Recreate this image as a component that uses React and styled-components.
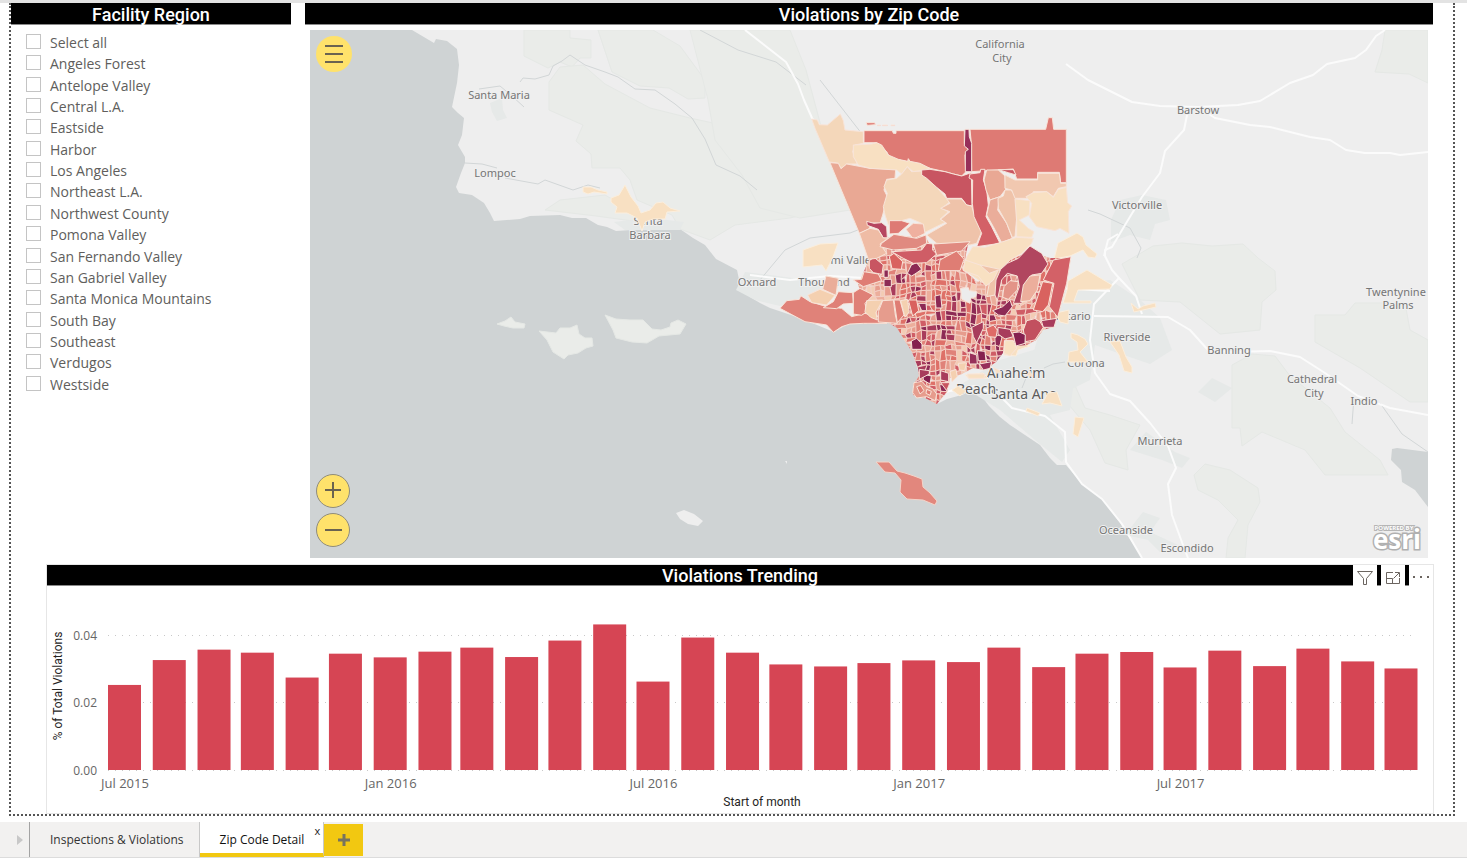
import React from 'react';
import styled, { createGlobalStyle } from 'styled-components';

const GlobalStyle = createGlobalStyle`
  *, *::before, *::after { box-sizing: border-box; }
  body {
    margin: 0;
    background: #fff;
    color: #605e5c;
    font-family: 'Open Sans', 'Noto Sans', sans-serif;
  }
  button, input { font: inherit; }
`;

const DIN = "Roboto, 'Liberation Sans', sans-serif";

const Page = styled.div`
  display: flex;
  flex-direction: column;
  border-top: 3px solid #e3e3e3;
`;

const Canvas = styled.main`
  margin: 0 12px 6px 9px;
  border: 2px dotted #555;
  border-top: 0;
`;

const TopRow = styled.div`
  display: flex;
  align-items: flex-start;
  gap: 14px;
  margin: 0 20px 6px 0;
`;

const Slicer = styled.section`
  flex: 0 0 280px;
`;

const MapPanel = styled.section`
  flex: 1;
  min-width: 0;
`;

const TitleBar = styled.header`
  display: grid;
  grid-template-columns: 1fr auto 1fr;
  height: ${(p) => p.$height}px;
  background: #000;
  border-bottom: 1px solid #8a8a8a;
  line-height: ${(p) => p.$line}px;
`;

const Title = styled.h2`
  grid-column: 2;
  margin: 0;
  color: #fff;
  font-family: ${DIN};
  font-size: 18px;
  font-weight: 500;
`;

const RegionList = styled.ul`
  display: grid;
  grid-auto-rows: 1fr;
  height: 363px;
  margin: 6px 0 0;
  padding: 0 0 0 15px;
  list-style: none;
`;

const RegionLabel = styled.label`
  display: flex;
  align-items: center;
  gap: 9px;
  font-size: 14px;
  line-height: 18px;
`;

const RegionName = styled.span`
  padding-top: 3px;
`;

const CheckBox = styled.input`
  appearance: none;
  width: 15px;
  height: 15px;
  margin: 0;
  border: 1px solid #c4c4c4;
  background: #fff;
  &:checked { background: #605e5c; }
`;

const MapFrame = styled.div`
  position: relative;
  margin: 5px 5px 0;
`;

const MapSvg = styled.svg`
  display: block;
  width: 100%;
  aspect-ratio: 1118 / 528;
  background: #cfd3d4;
`;

const MapLabel = styled.text`
  fill: ${(p) => (p.$major ? '#5c5c5c' : '#757575')};
  stroke: #f0f0f0;
  stroke-width: 2px;
  paint-order: stroke;
  font: ${(p) => (p.$major ? 14 : 11)}px 'Noto Sans', sans-serif;
  text-anchor: middle;
`;

const EsriSmall = styled.text`
  fill: #fff;
  stroke: #b5b5b5;
  stroke-width: 2px;
  paint-order: stroke;
  font: 700 6px 'Open Sans', sans-serif;
  text-anchor: middle;
`;

const EsriWord = styled.text`
  fill: #fff;
  stroke: #b0b0b0;
  stroke-width: 3px;
  paint-order: stroke;
  font: 700 26px 'Open Sans', sans-serif;
  text-anchor: middle;
`;

const RoundButton = styled.button`
  display: grid;
  place-items: center;
  width: ${(p) => (p.$plain ? 36 : 34)}px;
  height: ${(p) => (p.$plain ? 36 : 34)}px;
  padding: 0;
  border: ${(p) => (p.$plain ? '0' : '1px solid #8f8c7c')};
  border-radius: 50%;
  background: #ffe26b;
`;

const MenuSpot = styled.div`
  position: absolute;
  top: 6px;
  left: 6px;
`;

const ZoomSpot = styled.div`
  position: absolute;
  bottom: 11px;
  left: 6px;
  display: flex;
  flex-direction: column;
  gap: 5px;
`;

const TrendPanel = styled.section`
  margin: 0 19px 0 35px;
  border: 1px solid #e6e6e6;
`;

const Tools = styled.div`
  grid-column: 3;
  justify-self: end;
  display: flex;
  gap: 4px;
  height: 21px;
`;

const ToolButton = styled.button`
  display: grid;
  place-items: center;
  width: 24px;
  height: 21px;
  padding: 4px 0 0;
  border: 0;
  background: #fff;
`;

const ChartSvg = styled.svg`
  display: block;
  width: 100%;
`;

const AxisText = styled.text`
  fill: #666;
  font: ${(p) => (p.$vertical ? 12 : 13)}px 'Open Sans', sans-serif;
  text-anchor: ${(p) => (p.$vertical ? 'end' : 'middle')};
`;

const AxisTitle = styled.text`
  fill: #252423;
  font: 12px ${DIN};
  text-anchor: middle;
`;

const TabBar = styled.nav`
  display: flex;
  height: 36px;
  background: #f2f1f0;
  border-bottom: 1px solid #dcdcdc;
`;

const ScrollButton = styled.button`
  display: grid;
  place-items: center;
  width: 30px;
  padding: 0 0 0 10px;
  border: 0;
  border-right: 1px solid #a3a3a3;
  background: none;
`;

const Tab = styled.div`
  position: relative;
  display: flex;
  border-right: 1px solid #c8c8c8;
  border-bottom: ${(p) => (p.$active ? '4px solid #f2c811' : '0')};
  background: ${(p) => (p.$active ? '#fff' : 'transparent')};
`;

const TabButton = styled.button`
  height: 35px;
  padding: 0 ${(p) => (p.$active ? 19 : 15)}px 0 20px;
  border: 0;
  background: none;
  color: ${(p) => (p.$active ? '#111' : '#333')};
  font-size: 12px;
  line-height: 35px;
  white-space: nowrap;
`;

const CloseButton = styled.button`
  position: absolute;
  top: 2px;
  right: 2px;
  padding: 0 1px;
  border: 0;
  background: none;
  color: #222;
  font-size: 11px;
  line-height: 14px;
`;

const AddButton = styled.button`
  display: grid;
  place-items: center;
  width: 39px;
  height: 32px;
  margin-top: 2px;
  padding: 0;
  border: 0;
  background: #f2c811;
`;

const regions = [
  'Select all', 'Angeles Forest', 'Antelope Valley', 'Central L.A.', 'Eastside', 'Harbor',
  'Los Angeles', 'Northeast L.A.', 'Northwest County', 'Pomona Valley', 'San Fernando Valley',
  'San Gabriel Valley', 'Santa Monica Mountains', 'South Bay', 'Southeast', 'Verdugos', 'Westside',
];

/* ---------- map data ---------- */

const land =
  'M412 30L434 43 436 39 447 41 457 49 459 65 457 83 452 107 458 113 464 118 462 135 458 145 465 157 465 163 461 173 456 187 459 193 472 195 484 203 490 213 494 221 520 219 530 216 560 215 572 218 586 218 598 225 607 227 616 231 632 230 660 228 680 229 693 238 705 245 716 259 737 270 740 284 750 297 760 303 770 308 800 318 834 332 848 324 889 323 897 328 905 341 912 352 918 370 919 376 913 385 913 395 925 398 937 404 947 399 958 396 968 392 980 394 989 406 1000 417 1010 425 1022 433 1040 445 1050 458 1057 465 1066 465 1082 484 1102 499 1120 523 1142 558H1428V30Z';

const islands = [
  'M497 324L505 321 511 317 515 322 525 324 524 328 513 328 504 326Z',
  'M539 331L556 333 560 328 570 328 577 325 579 334 585 338 592 338 593 346 586 348 578 353 568 355 564 359 553 352 547 340Z',
  'M605 315L616 319 630 320 643 320 652 329 661 330 670 327 671 323 678 320 686 324 680 334 659 336 647 343 632 342 616 338 613 330Z',
];

const bareIslands = 'M676 513L684 510 694 514 703 521 698 526 688 524 680 519ZM785 461L787 461 787 464Z';

const parks = [
  'M524 30H570L570 38 591 40V58H580L572 67 560 62 548 68 524 56Z',
  'M598 30H653L680 46 705 80 705 98 688 99 669 88 640 86 612 72Z',
  'M549 82L560 67 583 65 605 84 650 108 690 118 745 130 790 165 820 190 822 210 790 218 735 225 710 240 680 229 672 215 637 200 630 180 620 168H592L591 154 576 141 583 125 549 110Z',
  'M545 210L560 200 605 195 640 215 640 222 596 216Z',
  'M690 30H790L806 70 822 130 850 210 800 218 760 208 742 175 715 140 708 100Z',
  'M1385 30H1428V83L1409 74 1375 72 1382 50Z',
  'M1122 264L1153 246 1182 243 1212 246 1243 244 1258 258 1275 271 1276 290 1262 302 1260 330 1220 334 1180 302 1140 300Z',
  'M1315 315H1345L1355 303H1405L1410 330 1428 340V402H1410L1360 368 1315 342Z',
  'M1232 365L1252 354 1275 356 1290 376 1300 384 1330 408 1345 432 1380 460 1388 475H1325L1305 450 1262 432 1242 446 1240 428H1232Z',
  'M1069 372L1085 408 1110 415 1140 425 1126 450 1128 470 1105 463 1090 430 1069 405Z',
  'M1194 475L1205 464 1230 470 1258 488 1260 502 1248 525 1245 558H1226L1228 538 1238 520 1218 500 1198 490Z',
];

const urban = [
  'M1120 200L1142 195 1166 200 1170 220 1155 224 1150 240 1130 235 1111 242V220Z',
  'M1060 285L1110 280 1140 300 1160 318 1172 350 1150 364 1115 352 1095 345 1090 380 1060 395 1030 365 1040 330Z',
  'M960 385L1000 360 1050 345 1075 375 1070 410 1050 415 1070 450 1062 462 1035 440 1000 410Z',
  'M1198 392L1212 378 1232 388 1215 402Z',
  'M1130 450L1146 432 1175 452 1190 458 1182 468 1162 460Z',
  'M1125 535L1143 512 1160 518 1150 532 1178 545 1160 552 1148 540Z',
  'M490 103L502 98 503 110 507 118 497 121 492 112Z',
  'M736 290L745 272 770 275 808 280 838 290 820 302 780 306 755 300Z',
  'M614 222L650 218 684 222 680 230H625Z',
];

const rivers = [
  'M520 82L523 78 535 79 549 75 553 66 562 61 570 55 585 65 605 72 618 77 635 89 655 90 675 104 692 118 705 139 716 165 740 176 757 190',
  'M479 89L500 86 512 96 524 107M465 163L482 164 497 168M505 178L538 184 545 180 573 190 588 185 600 188',
  'M760 280L785 250 810 238 850 233 863 228M820 80L862 134M700 30L738 50 776 62 806 85',
  'M1088 210L1100 214 1130 228 1141 248 1137 258M1380 403L1402 434 1428 452M1354 397L1352 424',
  'M1044 368L1053 364 1065 362M1022 388L1026 378',
];

const roads = [
  'M745 30L786 62 798 84 804 100 812 118 820 128',
  'M1066 64L1088 80 1132 102 1160 106 1198 107 1238 105 1260 101 1290 83 1313 75 1327 64 1355 58 1366 50 1376 36 1385 30',
  'M1198 107L1215 118 1250 125 1270 127 1310 137 1330 140 1346 150 1365 153 1390 153 1400 155 1428 152',
  'M1187 115L1184 130 1165 151 1160 173 1142 197 1125 225 1112 247 1105 250 1105 256 1112 270 1119 278 1094 304 1090 340 1095 373 1110 394 1130 401 1150 423 1168 446 1176 468 1168 484 1172 515 1183 545 1188 558',
  'M1119 278L1136 296 1142 314M1094 316L1168 317 1190 330 1208 350 1230 352 1270 351 1300 357 1325 373 1358 396 1390 408 1428 415',
  'M1104 256L1108 240 1118 234M945 392L975 386 1000 396 1012 408 1045 416 1065 432 1066 462 1082 484 1102 499 1122 524 1142 558',
  'M1055 288L1110 291M750 275L790 280 830 276 865 278',
];

const cities = [
  ['Santa Maria', 499, 99], ['Lompoc', 495, 177], ['Santa', 648, 225], ['Barbara', 650, 239],
  ['Oxnard', 757, 286], ['Thousand', 824, 286], ['Simi Valley', 849, 264],
  ['California', 1000, 48], ['City', 1002, 62], ['Barstow', 1198, 114], ['Victorville', 1137, 209],
  ['Ontario', 1071, 320], ['Riverside', 1127, 341], ['Corona', 1086, 367], ['Banning', 1229, 354],
  ['Twentynine', 1396, 296], ['Palms', 1398, 309], ['Cathedral', 1312, 383], ['City', 1314, 397],
  ['Indio', 1364, 405], ['Murrieta', 1160, 445], ['Oceanside', 1126, 534], ['Escondido', 1187, 552],
];

const majorCities = [['Anaheim', 1016, 378], ['Santa Ana', 1024, 399], ['Beach', 976, 394]];

const outlyingZips =
  'M583 187L591 187 598 190 607 192 607 194 594 192 588 194 583 192ZM611 198L619 195 625 185 631 197 638 206 641 213 650 210 656 203 663 202 670 208 680 211 667 212 665 219 653 219 645 222 642 231 637 218 627 213 615 213 617 207 611 202ZM803 250L820 244 838 243 833 257 826 271 822 265 803 267ZM1058 243L1077 233 1083 237 1086 245 1097 254 1095 258 1088 257 1083 250 1070 256 1054 259ZM1068 281L1087 270 1112 285 1110 289 1078 290 1074 301H1091V303H1063L1067 290ZM1056 313L1069 310 1068 324 1060 322ZM1071 333L1078 335 1085 339 1088 344 1080 352 1088 362 1068 362 1069 352 1078 350 1077 342 1071 338ZM1110 342L1120 341 1126 357 1132 367 1132 373 1124 371 1119 355ZM1131 303L1138 309 1143 306 1155 303 1156 307 1143 310 1134 312ZM1027 408L1040 413 1038 416 1026 411ZM1048 393L1057 392 1062 406 1050 403 1042 404ZM1075 417L1084 418 1078 437 1073 434ZM1003 343L1014 340 1030 346 1018 350 1016 356 1004 355ZM965 375L983 373 988 378 970 379ZM952 390L958 386 966 391 960 396Z';

/* Zip areas of the northern half, drawn on a grid of three units per map pixel. */
const northZips = [
  ['#f4d7ba', 'M125 57L142 60 148 74 172 75 211 42 220 62 225 90 280 95V130L255 135 248 155 262 192 230 192 213 206 205 190 178 186 135 85Z'],
  ['#de7a74', 'M282 92H367L370 100H378V92H583V130L595 150 585 165 587 216 575 228 550 222 525 215 480 205 415 186 360 174 350 155 320 128H282Z'],
  ['#de7a74', 'M600 88H827L835 53H847L851 88H889V248H872L868 217H803V237H740L730 207 605 215 604 130Z'],
  ['#97305a', 'M585 88H597L598 110 605 130V215H586V155L595 148 583 138Z'],
  ['#de7a74', 'M288 68L314 68 317 74 292 76ZM323 75H331V77H323ZM338 75H352V77H338ZM363 75H374V77H363Z'],
  ['#e9a894', 'M180 188L205 190 213 206 230 192 300 205 377 208 375 235 350 238 342 270 352 290 338 345 330 370 295 368 300 385 268 400Z'],
  ['#f8e0c2', 'M250 135L305 132 320 128 335 135 355 165 385 178 413 184 415 176 420 184 450 190 480 205 455 212 430 215 412 200 395 222 380 210 300 205 265 195 250 170Z'],
  ['#f4d7ba', 'M380 235L395 222 412 200 425 215 455 213 470 235 500 262 525 290 540 305 515 325 535 335 510 358 530 365 465 397 455 370 420 355 395 362 355 375 345 345 340 320 352 280 342 260 350 240Z'],
  ['#c85561', 'M455 210L480 208 525 215 550 222 575 228 604 218 606 318 590 315 575 295 530 295 525 282 500 262 470 235 455 225Z'],
  ['#efc3aa', 'M530 297L575 297 590 315 605 318 615 350 635 395 620 430 600 435 500 430 470 405 530 370 512 358 540 335 512 325 540 310Z'],
  ['#d36167', 'M600 222L630 218 632 208H645L640 240 650 270 655 315 648 350 665 380 690 430 620 440 635 400 612 350 607 310 608 240 597 234Z'],
  ['#e9a894', 'M650 210H685L705 228 707 268 690 290 660 300 648 270 642 240Z'],
  ['#c85561', 'M685 209H730L738 225 715 218Z'],
  ['#eaad9a', 'M660 300L690 290 683 330 710 370 727 415 695 428 670 380 650 345Z'],
  ['#efc3aa', 'M684 295L700 288 705 270 722 270 737 284 742 330 735 410 727 412 710 370 685 325Z'],
  ['#f1c8b0', 'M705 225L735 240H803V220H868L872 250H889V260L865 265 850 290 830 275 790 275 785 295H735L725 270 705 265Z'],
  ['#f8e0c2', 'M790 278L830 275 850 292 865 268 889 262 893 308 905 318 895 335 897 400 870 385 855 392 800 380 778 350 785 310 768 290Z'],
  ['#f8e0c2', 'M735 297L780 302 778 345 748 360 775 385 792 395 785 412 740 410 740 365Z'],
  ['#b64660', 'M290 364L312 370 335 368 350 380 352 414H340L325 388 292 376Z'],
  ['#de7a74', 'M358 362L395 362 420 370 385 400 358 402Z'],
  ['#efb09f', 'M408 388L430 370 460 372 465 400 430 417Z'],
  ['#efbca5', 'M268 400L300 385 325 390 340 414 355 414 330 432 350 460 320 475 295 478Z'],
  ['#e08a80', 'M335 430L372 403 400 408 440 415 468 405 470 430 440 445 370 450 330 440Z'],
  ['#cf5d66', 'M365 455L455 450 470 430 488 432 488 450 500 462 470 488 430 490 400 475Z'],
  ['#e08a80', 'M490 432L600 425 575 453 500 466Z'],
  ['#df7d74', 'M505 512L510 480 560 453 582 478 570 512Z'],
  ['#f8e0c2', 'M578 508L590 470 608 440 645 442 740 412 790 415 785 430 756 460 720 480 690 510 680 545 640 550Z'],
];

/* Malibu and the western valley, same three-unit grid. */
const westZips = [
  ['#e08279', 'M30 205L50 182 88 178 92 167 120 185 170 200 215 205 245 230 285 220 330 232 350 250 280 250 240 252 215 260 190 277 170 255 105 245Z'],
  ['#df8077', 'M160 203L190 185 205 155 248 158 250 190 220 192 200 206Z'],
  ['#df8077', 'M250 158L270 145 310 165 285 190 290 215 275 226 250 222Z'],
  ['#f4d0b0', 'M290 182L338 180 318 218 322 240 302 232 285 215Z'],
  ['#e69c8d', 'M338 182L370 180 376 225 382 250 325 246 325 215Z'],
  ['#df7d74', 'M372 180H390L402 225 382 248Z'],
  ['#f4d0b0', 'M392 182L412 178 418 215 405 232Z'],
  ['#d9625f', 'M415 180L440 180 446 212 428 228Z'],
  ['#f4d0b0', 'M113 165L150 148 195 166 170 195 125 188Z'],
  ['#eaad9a', 'M168 108L205 115 198 166 158 148Z'],
  ['#c85561', 'M298 85L298 62 312 52 340 75 336 103 310 98Z'],
  ['#df7d74', 'M250 120L275 118 282 95 325 102 335 122 280 140Z'],
  ['#d9625f', 'M358 50L372 40 398 65 394 88 366 86Z'],
  ['#8d2a55', 'M342 90H355V112H342ZM342 118H364V140H342ZM412 100L424 75 440 68 455 88 438 100 425 108Z'],
  ['#8d2a55', 'M495 168L512 164 516 204 498 204ZM445 190L468 190 470 212 455 212Z'],
  ['#85204f', 'M424 303L440 295 456 312 456 328 426 328ZM458 402L484 408 480 432 460 420Z'],
  ['#a83c5c', 'M448 388L478 392 478 402 448 418ZM512 392L536 400 536 425 512 420Z'],
  ['#c85561', 'M512 428H540L530 452Z'],
  ['#e69c8d', 'M432 428L456 424 470 440 488 446 500 462 496 482 470 470 440 474 428 458Z'],
  ['#df7d74', 'M440 440L452 436 462 452 450 462ZM470 448L484 454 480 466 468 460Z'],
];

/* San Gabriel Valley and the eastern edge, same three-unit grid. */
const eastZips = [
  ['#efc3aa', 'M145 100L150 75 210 88 205 120 195 165 170 170 178 130Z'],
  ['#f8e0c2', 'M105 60L150 75 178 100 205 90 190 120 168 138 145 108 100 92Z'],
  ['#b1465f', 'M212 88L232 70 265 55 300 18 335 40 354 72 335 100 305 105 300 135 275 190 250 190 268 140 262 108 232 100 215 120 202 182 195 165 198 120Z'],
  ['#e39488', 'M222 140L240 122 265 125 262 150 235 178 218 172Z'],
  ['#ecae9c', 'M280 135L300 108 330 105 322 150 300 182 272 185Z'],
  ['#d36167', 'M370 60L423 50 410 130 383 232 370 215 358 200 372 130 340 120 355 90Z'],
  ['#d9625f', 'M338 125L368 130 355 195 338 215 310 210Z'],
  ['#a83c5c', 'M334 242L380 235 372 262 340 262Z'],
  ['#c2505f', 'M290 242L315 236 330 245 340 262 315 300 286 305 280 270Z'],
  ['#85204f', 'M248 278L268 276 286 284 285 310 258 318Z'],
  ['#8d2a55', 'M188 212L218 200 240 180 247 200 225 228 205 225Z'],
  ['#a83c5c', 'M204 262L240 268 250 290 225 297 204 282Z'],
  ['#df6b67', 'M168 265L190 255 202 270 198 292 175 290Z'],
  ['#85204f', 'M142 332L165 334 168 362 145 362Z'],
  ['#97305a', 'M118 338L140 345 142 372 118 372ZM148 372L185 365 180 385 160 390Z'],
  ['#a83c5c', 'M125 262L160 245 160 265 140 308 130 290Z'],
  ['#f8e0c2', 'M225 302L250 302 260 325 240 348 222 340Z'],
  ['#f8e0c2', 'M112 402L165 402 162 415 115 415ZM190 382L215 395 200 400ZM290 405L300 393 308 410Z'],
  ['#f4d0b0', 'M60 395L78 388 82 410 66 425ZM85 370L110 368 104 392 88 390Z'],
  ['#ececec', 'M92 145L115 143 118 152 140 155 138 170 122 175 120 190 96 178Z'],
];

const basinOutline =
  'M868 262L880 238 925 236 932 248 968 244 963 270 978 282 992 270 1003 262 1030 252 1050 258 1066 258 1057 318 1053 327 1043 330 1036 340 1027 345 1016 346 1004 340 1003 353 996 362 985 370 973 368 962 374 950 378 947 392 940 400 937 404 925 398 913 395 913 385 919 376 918 368 912 352 905 341 897 328 889 323 848 324 865 300 858 285Z';

const tones = ['#f3ccb4', '#ecae9c', '#e69c8d', '#e08279', '#de7068', '#cf5d66', '#a83c5c', '#8d2a55'];

const noise = (a, b) => {
  const n = Math.sin(a * 127.1 + b * 311.7) * 43758.5453;
  return n - Math.floor(n);
};

/* Ways to split a block of four mesh squares: [column, row, width, height]. */
const splits = [
  [[0, 0, 1, 1], [1, 0, 1, 1], [0, 1, 1, 1], [1, 1, 1, 1]],
  [[0, 0, 1, 2], [1, 0, 1, 2]],
  [[0, 0, 2, 1], [0, 1, 1, 1], [1, 1, 1, 1]],
  [[0, 0, 1, 2], [1, 0, 1, 1], [1, 1, 1, 1]],
  [[0, 0, 1, 1], [1, 0, 1, 1], [0, 1, 2, 1]],
];

const hotSpots = [[938, 310, 26], [996, 345, 20], [930, 370, 14], [980, 315, 20], [908, 284, 14]];

/* Small urban zip areas: an irregular mesh, darker around the city centres. */
function buildMesh() {
  const step = 5;
  const vertex = (i, j) => [
    846 + i * step + (noise(i, j) - 0.5) * 3,
    233 + j * step + (noise(j + 40, i) - 0.5) * 3 + Math.sin(i / 4) * 3,
  ];
  const cells = [];
  for (let j = 0; j < 36; j += 2) {
    for (let i = 0; i < 46; i += 2) {
      const split = splits[Math.floor(noise(i + 7, j + 91) * splits.length)];
      split.forEach(([c, r, w, h]) => {
        const a = i + c;
        const b = j + r;
        const pts = [vertex(a, b), vertex(a + w, b), vertex(a + w, b + h), vertex(a, b + h)];
        const [x, y] = pts[0];
        const heat = Math.max(...hotSpots.map(([hx, hy, rad]) => 1 - Math.hypot(x - hx, y - hy) / (rad * 2)), 0);
        const level = Math.min(7, Math.floor(noise(a * 3 + 2, b * 5 + 1) * 6 + heat * 3));
        cells.push([tones[level], `M${pts.map((p) => p.map((v) => v.toFixed(1)).join(' ')).join('L')}Z`]);
      });
    }
  }
  return cells;
}

const mesh = buildMesh();

function ZipLayer({ areas, transform, line = 3, color = '#f8e4d9' }) {
  return (
    <g transform={transform} stroke={color} strokeWidth={line} strokeLinejoin="round">
      {areas.map(([fill, d], i) => <path key={i} fill={fill} d={d} />)}
    </g>
  );
}

function ViolationsMap() {
  return (
    <MapSvg viewBox="310 30 1118 528" preserveAspectRatio="xMidYMid slice" role="img" aria-label="Violations by zip code map">
      <defs>
        <clipPath id="basin"><path d={basinOutline} /></clipPath>
      </defs>
      <path fill="#eee" d={land} />
      <g fill="#eaece9" stroke="#e5e8e5" strokeWidth="1">
        {parks.map((d) => <path key={d} d={d} />)}
        {islands.map((d) => <path key={d} d={d} />)}
      </g>
      <path fill="#eee" d={bareIslands} />
      <g fill="#e6e9e8">{urban.map((d) => <path key={d} d={d} />)}</g>
      <path fill="#cfd3d4" d="M1392 449L1397 448 1428 452V507L1415 490 1402 482 1401 470 1391 460Z" />
      <g fill="none" stroke="#d2d6d7" strokeWidth="1">{rivers.map((d) => <path key={d} d={d} />)}</g>
      <g fill="none" stroke="#fbfbfb" strokeWidth="2" strokeLinejoin="round">{roads.map((d) => <path key={d} d={d} />)}</g>

      {cities.map(([name, x, y]) => <MapLabel key={name + y} x={x} y={y}>{name}</MapLabel>)}
      {majorCities.map(([name, x, y]) => <MapLabel $major key={name} x={x} y={y}>{name}</MapLabel>)}

      <path fill="#f8e0c2" stroke="#fbeedd" strokeWidth="1" d={outlyingZips} />
      <g clipPath="url(#basin)"><ZipLayer areas={mesh} line={1} color="#f3cfc4" /></g>
      <ZipLayer areas={westZips} transform="translate(770 240) scale(0.33333)" />
      <ZipLayer areas={northZips} transform="translate(770 100) scale(0.33333)" />
      <ZipLayer areas={eastZips} transform="translate(930 240) scale(0.33333)" />
      <path
        fill="#e2877d" stroke="#f3d5ca" strokeWidth="1"
        d="M876 462L889 462 897 471 905 473 914 476 922 479 923 487 930 493 937 501 935 505 923 500 907 499 900 492 901 480 895 473 885 472Z"
      />
      <EsriSmall x="1394" y="530">POWERED BY</EsriSmall>
      <EsriWord x="1397" y="549">esri</EsriWord>
    </MapSvg>
  );
}

/* ---------- chart ---------- */

const values = [
  0.0253, 0.0327, 0.0358, 0.0349, 0.0275, 0.0346, 0.0335, 0.0352, 0.0364, 0.0336,
  0.0385, 0.0433, 0.0263, 0.0394, 0.0349, 0.0314, 0.0308, 0.0318, 0.0326, 0.0321,
  0.0364, 0.0306, 0.0346, 0.0351, 0.0305, 0.0355, 0.0309, 0.0361, 0.0323, 0.0302,
];

const DAY = 86400000;
const start = Date.UTC(2015, 6, 1);
const monthX = (i) => 77 + ((Date.UTC(2015, 6 + i, 1) - start) / DAY) * 1.444;
const valueY = (v) => 184 - v * 3362;

const ticks = [['Jul 2015', 0], ['Jan 2016', 6], ['Jul 2016', 12], ['Jan 2017', 18], ['Jul 2017', 24]];

function TrendChart() {
  return (
    <ChartSvg viewBox="0 0 1386 227" role="img" aria-label="Percent of total violations by month">
      {[0.04, 0.02, 0].map((v) => (
        <g key={v}>
          <line
            x1="61" x2="1370" y1={Math.floor(valueY(v)) + 0.5} y2={Math.floor(valueY(v)) + 0.5}
            stroke="#c8c8c8" strokeDasharray="1 6"
          />
          <AxisText $vertical x="50" y={Math.floor(valueY(v)) + 5}>{v.toFixed(2)}</AxisText>
        </g>
      ))}
      {values.map((v, i) => (
        <rect key={i} x={monthX(i) - 16} width="33" y={valueY(v)} height={184 - valueY(v)} fill="#d64554" />
      ))}
      {ticks.map(([label, i]) => <AxisText key={label} x={monthX(i) + 1} y="202">{label}</AxisText>)}
      <AxisTitle transform="translate(15 100) rotate(-90)">% of Total Violations</AxisTitle>
      <AxisTitle x="715" y="220">Start of month</AxisTitle>
    </ChartSvg>
  );
}

function Glyph({ size, children, color = '#6b6560', width = 1 }) {
  return (
    <svg width={size} height={size} viewBox={`0 0 ${size} ${size}`} fill="none" stroke={color} strokeWidth={width} aria-hidden="true">
      {children}
    </svg>
  );
}

export default function App() {
  return (
    <Page>
      <GlobalStyle />
      <Canvas>
        <TopRow>
          <Slicer>
            <TitleBar $height={22} $line={24}><Title>Facility Region</Title></TitleBar>
            <RegionList>
              {regions.map((name) => (
                <li key={name}>
                  <RegionLabel><CheckBox type="checkbox" /><RegionName>{name}</RegionName></RegionLabel>
                </li>
              ))}
            </RegionList>
          </Slicer>
          <MapPanel>
            <TitleBar $height={22} $line={24}><Title>Violations by Zip Code</Title></TitleBar>
            <MapFrame>
              <ViolationsMap />
              <MenuSpot>
                <RoundButton $plain aria-label="Menu">
                  <Glyph size={20} color="#6a6350" width={2}><path d="M1 2H19M1 10H19M1 18H19" /></Glyph>
                </RoundButton>
              </MenuSpot>
              <ZoomSpot>
                <RoundButton aria-label="Zoom in">
                  <Glyph size={20} color="#6a6350" width={2}><path d="M2 9H18M10 1V17" /></Glyph>
                </RoundButton>
                <RoundButton aria-label="Zoom out">
                  <Glyph size={20} color="#6a6350" width={2}><path d="M2 10H19" /></Glyph>
                </RoundButton>
              </ZoomSpot>
            </MapFrame>
          </MapPanel>
        </TopRow>
        <TrendPanel>
          <TitleBar $height={21} $line={22}>
            <Title>Violations Trending</Title>
            <Tools>
              <ToolButton aria-label="Filters">
                <Glyph size={16}><path d="M.5 1.5H15.5L9.5 8.5V14.5H6.5V8.5Z" /></Glyph>
              </ToolButton>
              <ToolButton aria-label="Focus mode">
                <Glyph size={16}><path d="M8 2.5H1.5V13.5H14.5V8M1.5 8.5H7.5V13.5M8.5 8.5L14 3M10 2.5H14.5V7" /></Glyph>
              </ToolButton>
              <ToolButton aria-label="More options">
                <Glyph size={16}><path d="M0 7H2M7 7H9M14 7H16" strokeWidth="2" /></Glyph>
              </ToolButton>
            </Tools>
          </TitleBar>
          <TrendChart />
        </TrendPanel>
      </Canvas>
      <TabBar>
        <ScrollButton aria-label="Next pages">
          <svg width="6" height="10" viewBox="0 0 6 10" aria-hidden="true"><path d="M0 0L6 5 0 10Z" fill="#c8c8c8" /></svg>
        </ScrollButton>
        <Tab><TabButton>Inspections &amp; Violations</TabButton></Tab>
        <Tab $active>
          <TabButton $active>Zip Code Detail</TabButton>
          <CloseButton aria-label="Close page">x</CloseButton>
        </Tab>
        <AddButton aria-label="Add page">
          <Glyph size={12} color="#77735f" width={3}><path d="M6 0V12M0 6H12" /></Glyph>
        </AddButton>
      </TabBar>
    </Page>
  );
}
